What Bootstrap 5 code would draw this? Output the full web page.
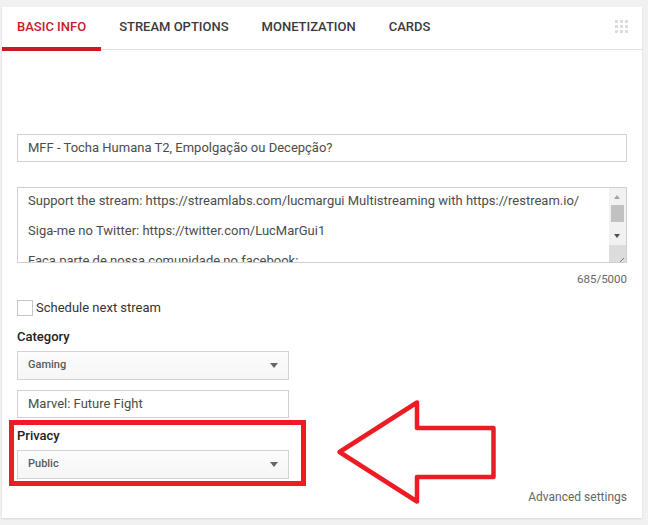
<!DOCTYPE html>
<html lang="en">
<head>
<meta charset="utf-8">
<title>Basic info</title>
<link href="https://cdn.jsdelivr.net/npm/bootstrap@5.3.0/dist/css/bootstrap.min.css" rel="stylesheet">
<style>
html,body{height:525px;overflow:hidden}
body{background:#f1f1f1;font-family:Roboto,"Liberation Sans",sans-serif;color:#333;position:relative}
.sheet{position:absolute;left:2px;top:7px;width:640px;height:511px;background:#fff;box-shadow:0 1px 2px rgba(0,0,0,.1)}
.tabbar{height:43px;border-bottom:1px solid #e2e2e2}
.tabitem{font-size:13px;font-weight:500;color:#3a3a3a;padding:0 15px;height:43px;line-height:40px;margin-right:3px;white-space:nowrap}
.tabitem.on{color:#c4202b;border-bottom:4px solid #cc181e;height:44px}
.dots{display:grid;grid-template-columns:repeat(3,3px);gap:2px;margin-right:14px;align-self:center;margin-top:-3px}
.dots i{display:block;width:3px;height:3px;background:#dcdcdc}
.formbody{padding:84px 15px 0}
.field{border:1px solid #d0d0d0;height:28px;font-size:13px;line-height:26px;padding:0 10px;color:#4c4c4c;background:#fff;border-radius:0}
.descbox{height:76px;margin-top:25px;border:1px solid #d0d0d0;overflow:hidden;position:relative;font-size:13px;color:#4c4c4c;line-height:26px}
.desctext{padding:0 10px;white-space:nowrap}
.track{position:absolute;right:0;top:0;bottom:0;width:17px;background:#f1f1f1}
.track b{position:absolute;left:2px;top:17px;width:13px;height:17px;background:#c1c1c1}
.arr{position:absolute;left:5px;width:0;height:0;border-left:3.5px solid transparent;border-right:3.5px solid transparent}
.arr.up{top:7px;border-bottom:4px solid #a3a3a3}
.arr.down{top:46px;border-top:4px solid #505050}
.grip{position:absolute;right:0;bottom:0;width:17px;height:17px;background:#dcdcdc}
.counter{font-size:11.5px;color:#666;text-align:right;margin-top:9px;line-height:14px}
.schedule{font-size:13px;margin-top:14px;color:#333;line-height:16px}
.tick{width:16px;height:16px;border:1px solid #c6c6c6;background:#fff;margin-right:3px}
.fieldlabel{font-size:13px;font-weight:500;color:#222;line-height:16px;margin-bottom:6px}
.cat-label{margin-top:13px}
.priv-label{margin-top:10px}
.dropper{width:272px;height:29px;border:1px solid #d3d3d3;background:linear-gradient(#fcfcfc,#f6f6f6);font-size:11px;font-weight:500;color:#5a5a5a;padding:0 10px}
.dropper::after{content:"";width:0;height:0;border-left:4.5px solid transparent;border-right:4.5px solid transparent;border-top:5px solid #666}
.gamefield{width:272px;margin-top:10px}
.advanced{position:absolute;right:15px;bottom:14px;font-size:12px;color:#666;line-height:14px}
.mark-frame{position:absolute;left:9px;top:420px;width:297px;height:66px;border:5px solid #ed1c24;pointer-events:none}
.mark-arrow{position:absolute;left:330px;top:395px;width:172px;height:116px;pointer-events:none}
</style>
</head>
<body>
<div class="sheet">
  <div class="tabbar d-flex align-items-start">
    <div class="tabitem on">BASIC INFO</div>
    <div class="tabitem">STREAM OPTIONS</div>
    <div class="tabitem">MONETIZATION</div>
    <div class="tabitem">CARDS</div>
    <div class="dots ms-auto"><i></i><i></i><i></i><i></i><i></i><i></i><i></i><i></i><i></i></div>
  </div>
  <div class="formbody">
    <div class="field">MFF - Tocha Humana T2, Empolgação ou Decepção?</div>
    <div class="descbox">
      <div class="desctext">
        <div>Support the stream: https://streamlabs.com/lucmargui Multistreaming with https://restream.io/</div>
        <div class="mt-1">Siga-me no Twitter: https://twitter.com/LucMarGui1</div>
        <div class="mt-1">Faça parte de nossa comunidade no facebook:</div>
      </div>
      <div class="track">
        <span class="arr up"></span><b></b><span class="arr down"></span>
        <div class="grip">
          <svg width="17" height="17" viewBox="0 0 17 17"><path d="M8 15 15 8M12 15 15 12" stroke="#777" stroke-width="1" fill="none"/></svg>
        </div>
      </div>
    </div>
    <div class="counter">685/5000</div>
    <div class="schedule d-flex align-items-center"><span class="tick"></span>Schedule next stream</div>
    <div class="fieldlabel cat-label">Category</div>
    <div class="dropper d-flex align-items-center justify-content-between">Gaming</div>
    <div class="field gamefield">Marvel: Future Fight</div>
    <div class="fieldlabel priv-label">Privacy</div>
    <div class="dropper d-flex align-items-center justify-content-between">Public</div>
  </div>
  <div class="advanced">Advanced settings</div>
</div>
<div class="mark-frame"></div>
<svg class="mark-arrow" viewBox="330 395 172 116"><path d="M339.5 452 417 402.5V428H493.5V477H417V501.5Z" fill="none" stroke="#ed1c24" stroke-width="4.5" stroke-linejoin="round"/></svg>
</body>
</html>
